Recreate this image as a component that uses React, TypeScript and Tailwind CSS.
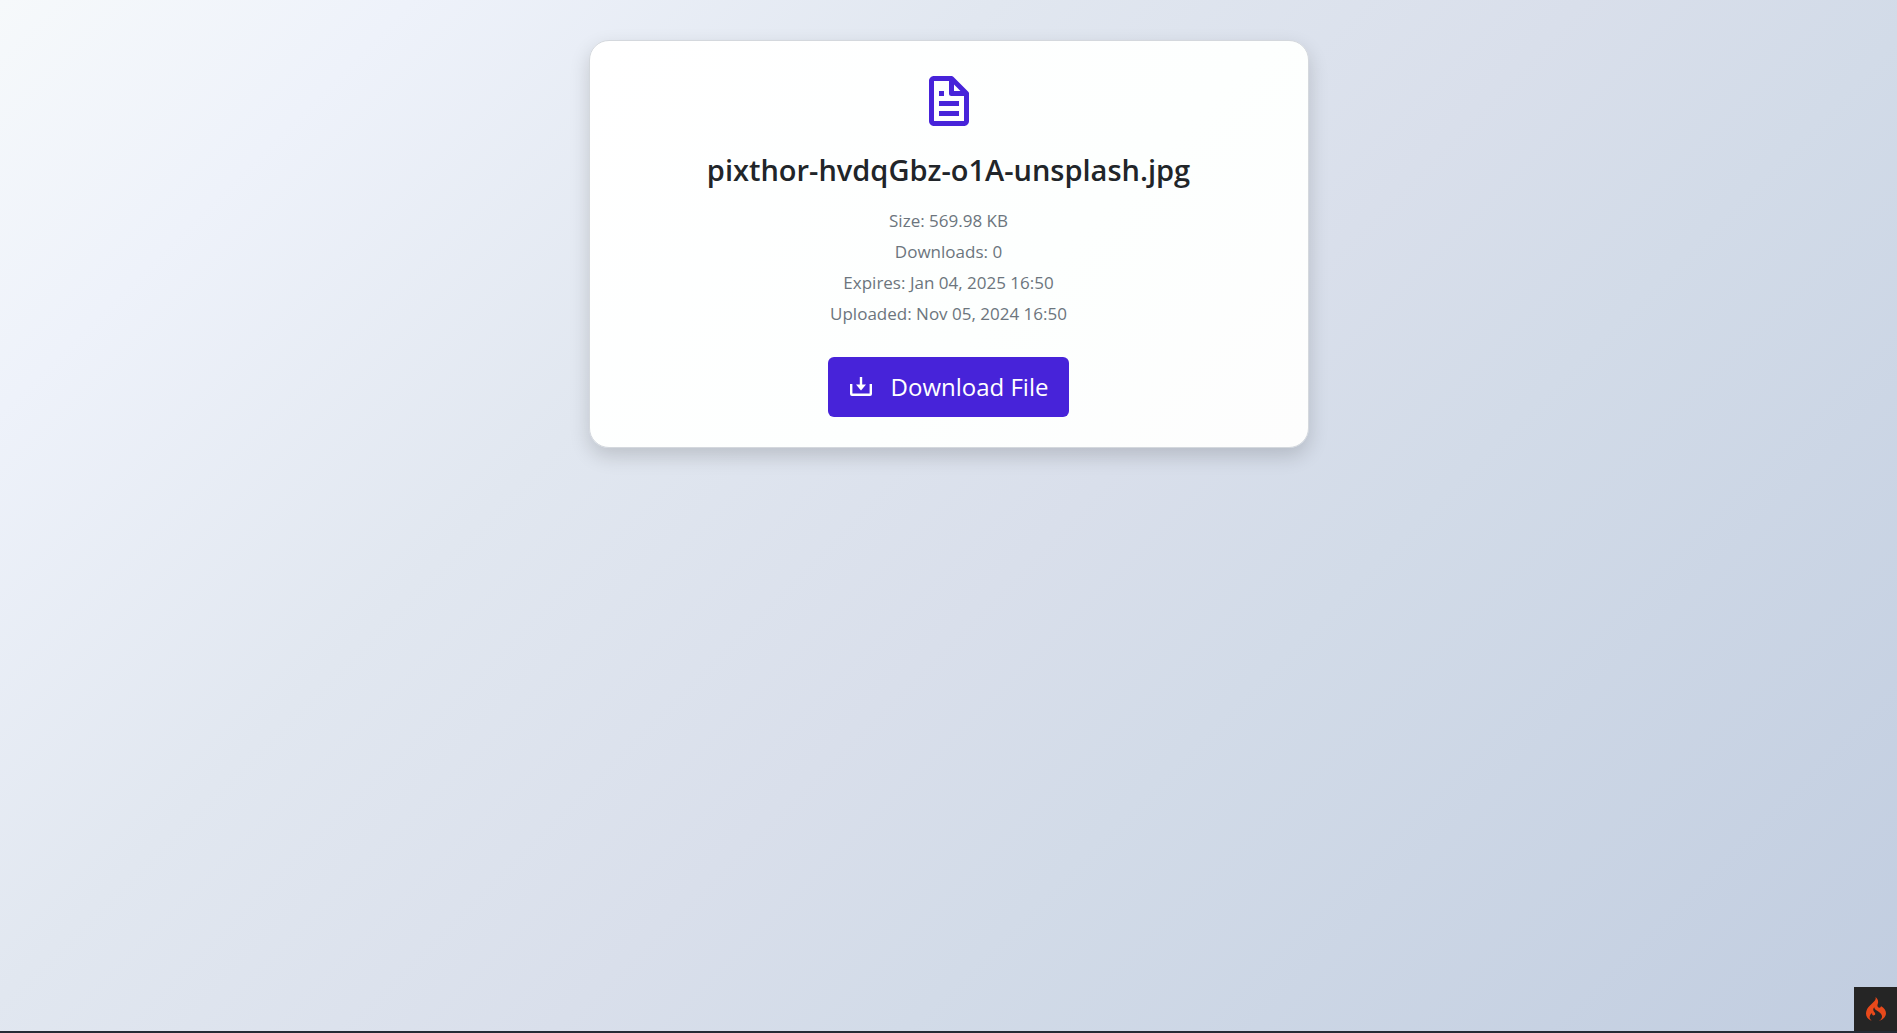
import { BiFile } from "react-icons/bi";
import { SiCodeigniter } from "react-icons/si";

const details = [
  ["Size", "569.98 KB"],
  ["Downloads", "0"],
  ["Expires", "Jan 04, 2025 16:50"],
  ["Uploaded", "Nov 05, 2024 16:50"],
];

function DownloadIcon() {
  return (
    <svg viewBox="0 0 24 20" className="w-6 h-5" fill="currentColor" aria-hidden="true">
      <path d="M1 7v10a2 2 0 0 0 2 2h18a2 2 0 0 0 2-2V7h-2.4v9.6H3.4V7z" />
      <path d="M10.8 0h2.4v7.4H17L12 13.6 7 7.4h3.8z" />
    </svg>
  );
}

export default function App() {
  return (
    <div className="min-h-screen flex flex-col border-b-2 border-[#252b35] bg-[linear-gradient(135deg,#f6f9fb_0%,#eef2fa_14%,#e1e7f0_34%,#d9dfeb_54%,#d2dbe8_66%,#c1cde0_100%)] font-['Open_Sans','Noto_Sans',sans-serif]">
      <main className="flex-1 w-full max-w-[720px] mx-auto pt-10">
        <section className="flex flex-col items-center rounded-[20px] border border-[#d4d8dd] bg-[linear-gradient(135deg,#ffffff,#fdfffe_60%,#fdfdfd)] pt-[30px] pb-[30px] px-8 shadow-[0_8px_20px_rgba(0,0,0,0.16)]">
          <BiFile className="size-[60px] text-[#4723d9]" />
          <h1 className="mt-5 text-[29px] leading-[38px] font-semibold text-[#212529]">pixthor-hvdqGbz-o1A-unsplash.jpg</h1>
          <div className="mt-4 mb-7 text-center text-[17px] leading-[31px] text-[#6c757d]">
            {details.map(([label, value]) => (
              <p key={label}>{label}: {value}</p>
            ))}
          </div>
          <a href="#download" className="flex items-center gap-[18px] h-[60px] px-[21px] rounded-md bg-[#4723d9] text-white text-[24px]">
            <DownloadIcon />
            Download File
          </a>
        </section>
      </main>
      <button aria-label="Open debug toolbar" className="fixed right-0 bottom-[2px] w-[43px] h-11 flex items-center justify-center bg-[#252525] text-[#e8491b]">
        <SiCodeigniter className="size-6" />
      </button>
    </div>
  );
}
